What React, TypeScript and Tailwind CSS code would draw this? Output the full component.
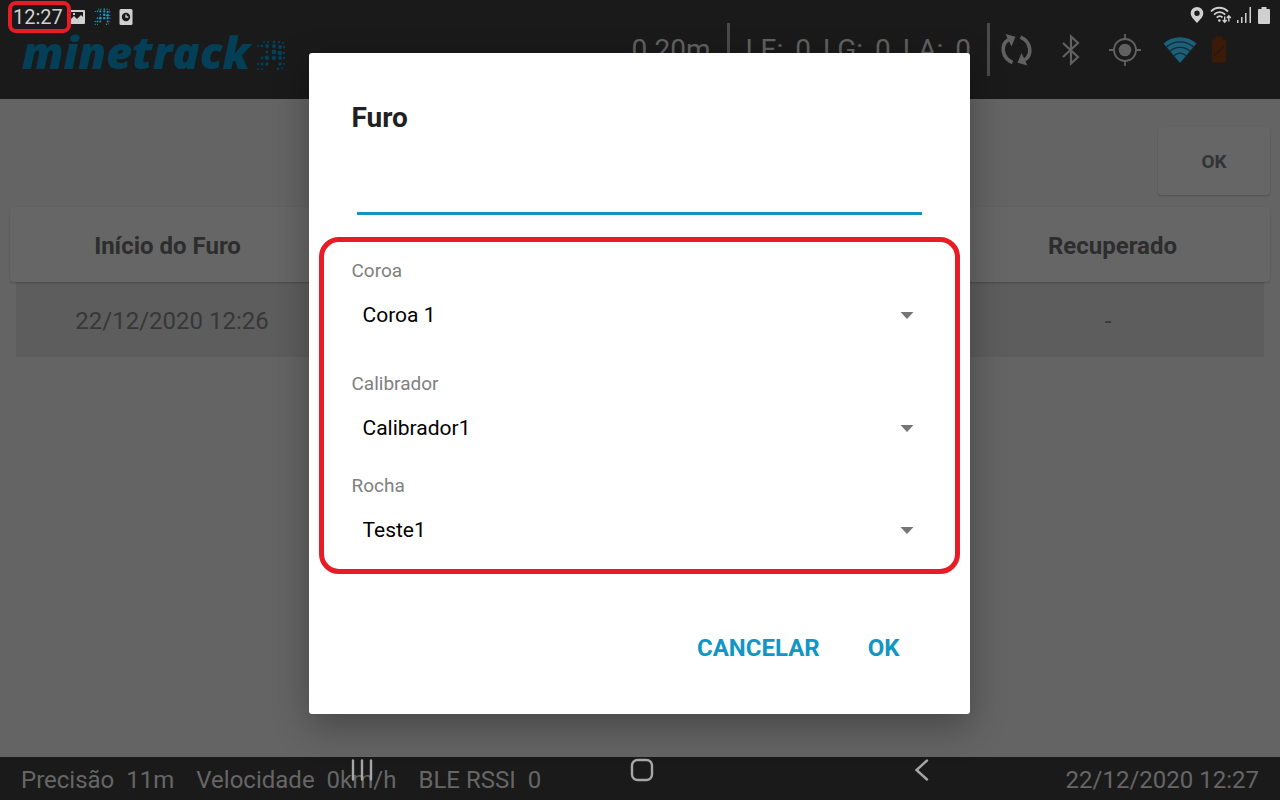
import React from "react";

const dots: [number, number, number][] = [
  [10, 2, 1], [14, 2, 1.2], [20, 2, 1.4], [25, 2, 1.2], [29, 3, 1],
  [4, 6, 1], [8, 6, 1.4], [13, 6, 2], [20, 6, 2], [26, 7, 2], [30, 7, 1.2],
  [13, 12, 1.4], [20, 12, 2.4], [26, 13, 2.4], [30, 13, 1.2],
  [8, 18, 1.4], [13, 18, 2.4], [20, 18, 2.2], [26, 18, 2], [30, 18, 1.2],
  [4, 24, 1.2], [8, 24, 1.6], [13, 24, 1.8], [26, 24, 1.8], [30, 24, 1],
  [4, 29, 1], [8, 29, 1], [24, 29, 1.4], [28, 28, 1],
];

function DotArrow({ className }: { className: string }) {
  return (
    <svg viewBox="0 0 32 32" className={className} fill="currentColor" aria-hidden="true">
      {dots.map(([x, y, r]) => (
        <circle key={`${x}-${y}`} cx={x} cy={y} r={r} />
      ))}
    </svg>
  );
}

function StatusBar() {
  return (
    <div className="absolute inset-x-0 top-0 z-30 flex h-[34px] items-center justify-between pl-2 pr-2.5 text-[#d0d0d0]">
      <div className="flex items-center">
        <time className="flex h-8 items-center rounded-lg border-4 border-[#e81c24] pl-px pr-1 text-xl leading-6">12:27</time>
        <svg viewBox="0 0 14 16" className="h-4 w-3.5" aria-hidden="true">
          <path fill="currentColor" fillRule="evenodd" d="M0 1h13a1 1 0 0 1 1 1v12a1 1 0 0 1-1 1H0zM0 3v7l3-3 3 3 4-4 2 2V3zM2 4h2v2H2z" />
        </svg>
        <DotArrow className="ml-2 h-[18px] w-[18px] text-[#2196c4]" />
        <svg viewBox="0 0 14 16" className="ml-2 h-4 w-3.5" aria-hidden="true">
          <rect x="0.5" width="13" height="16" rx="1.5" fill="currentColor" />
          <circle cx="7" cy="8" r="4.2" fill="#1a1a1a" />
          <path d="M7 5.500V8h2.300" fill="none" stroke="currentColor" strokeWidth="1.3" />
        </svg>
      </div>
      <div className="flex items-center pb-1">
        <svg viewBox="0 0 14 16" className="h-4 w-3.5" aria-hidden="true">
          <path fill="currentColor" fillRule="evenodd" d="M7 0a6.3 6.3 0 0 1 6.3 6.3C13.300 10 10 12.500 7 16 4 12.500.7 10 .7 6.300A6.300 6.300 0 0 1 7 0zm0 3.600a2.700 2.700 0 1 0 0 5.400 2.700 2.700 0 0 0 0-5.400z" />
        </svg>
        <svg viewBox="0 0 22 18" className="ml-1.5 h-[18px] w-[22px]" fill="none" stroke="currentColor" strokeWidth="1.8" aria-hidden="true">
          <path d="M1 5.500C5.500.5 13 .5 18 5.500M4 8.700c3.200-3.500 8-3.500 11.200 0M6.700 11.700c2-2 4-2 5.800-.2" />
          <circle cx="9.300" cy="14.500" r="1.300" fill="currentColor" stroke="none" />
          <path strokeWidth="1.400" d="M14.700 10.500v5.500M12.700 14l2 2.200 2-2.200M18.800 15.500V10M16.800 12l2-2.200 2 2.200" />
        </svg>
        <svg viewBox="0 0 16 16" className="ml-1 h-4 w-4" fill="currentColor" aria-hidden="true">
          <path d="M1 13h1.500v3H1zM5 10h1.500v6H5zM9 6h1.500v10H9zM13.500 0H15v16h-1.500z" />
        </svg>
        <svg viewBox="0 0 12 17" className="ml-1.5 h-[17px] w-3" fill="currentColor" aria-hidden="true">
          <path d="M3.500 0h5v2H11a1 1 0 0 1 1 1v13a1 1 0 0 1-1 1H1a1 1 0 0 1-1-1V3a1 1 0 0 1 1-1h2.500z" />
        </svg>
      </div>
    </div>
  );
}

function SyncArrow() {
  return (
    <>
      <path d="M12.500 29.500C2 25 0 12 8.500 6.500" fill="none" stroke="currentColor" strokeWidth="3.600" />
      <path d="M5.500 1l10 2.800-4 9.700z" fill="currentColor" />
    </>
  );
}

function Header() {
  return (
    <header className="flex h-[99px] items-center justify-between bg-[#1a1a1a] pl-[22px] pr-[53px] text-[#616161]">
      <div className="flex items-center gap-1 pt-1 text-[#033f57]">
        <span className="font-['Open_Sans',sans-serif] text-[45px] font-extrabold italic leading-[56px]">minetrack</span>
        <DotArrow className="mt-2 h-8 w-8" />
      </div>
      <div className="flex items-center gap-4 text-[28px] leading-9">
        <span>0.20m</span>
        <span className="h-[53px] w-[3px] bg-[#4a4a4a]" />
        <div className="flex gap-3">
          <span>LE:</span>
          <span>0</span>
          <span>LG:</span>
          <span>0</span>
          <span>LA:</span>
          <span>0</span>
        </div>
        <span className="h-[53px] w-[3px] bg-[#4a4a4a]" />
        <div className="flex items-center gap-[22px]">
          <svg viewBox="0 0 33 34" className="-ml-1.5 h-[34px] w-[33px]" aria-label="Sincronizar">
            <SyncArrow />
            <g transform="rotate(180 16.500 16.800)">
              <SyncArrow />
            </g>
          </svg>
          <svg viewBox="0 0 32 32" className="h-8 w-8" fill="none" stroke="currentColor" strokeWidth="2.200" aria-label="Bluetooth">
            <path d="M8 9l15 14-7 6.500V2.500L23 9 8 23" />
          </svg>
          <svg viewBox="0 0 32 32" className="h-8 w-8" fill="none" stroke="currentColor" strokeWidth="1.800" aria-label="GPS">
            <circle cx="16" cy="16" r="11" />
            <circle cx="16" cy="16" r="6.300" fill="currentColor" stroke="none" />
            <path d="M16 0v5M16 27v5M0 16h5M27 16h5" />
          </svg>
          <svg viewBox="0 0 34 28" className="h-7 w-[34px]" aria-label="Wi-Fi">
            <path d="M.5 7.500C10-1 24-1 33.500 7.500L17 27z" fill="#1b5f7b" />
            <path d="M3 11.500C11 4 23 4 31 11.500M6.500 15.500c6-5.500 15-5.500 21 0M10.500 20c4-3.500 9-3.500 13 0" fill="none" stroke="#1a2930" strokeWidth="1.300" />
          </svg>
          <svg viewBox="0 0 16 28" className="-ml-2 h-7 w-4" aria-label="Bateria">
            <path d="M4.500 0.500h7v3H15v23H1v-23h3.500z" fill="#3c1a08" />
            <path d="M3 20L13 10" stroke="#241a16" strokeWidth="1.800" />
          </svg>
        </div>
      </div>
    </header>
  );
}

function HoleTable() {
  return (
    <table className="mx-2.5 mt-3 block text-2xl text-[#2d2d2d]">
      <thead className="relative block rounded-sm bg-[#666666] shadow-[0_1px_2px_rgba(0,0,0,0.22)]">
        <tr className="grid h-[75px] grid-cols-4 items-center pt-0.5">
          <th className="font-bold">Início do Furo</th>
          <td />
          <td />
          <th className="font-bold">Recuperado</th>
        </tr>
      </thead>
      <tbody className="mx-1.5 block bg-[#5d5d5d] text-[#373737]">
        <tr className="grid h-[75px] grid-cols-4 items-center pt-0.5 text-center">
          <td>22/12/2020 12:26</td>
          <td />
          <td />
          <td>-</td>
        </tr>
      </tbody>
    </table>
  );
}

function SelectField({ id, label, value }: { id: string; label: string; value: string }) {
  return (
    <div>
      <label htmlFor={id} className="block text-[19px] leading-6 text-[#808080]">
        {label}
      </label>
      <div className="mt-[11px] grid items-center">
        <select id={id} defaultValue={value} className="col-start-1 row-start-1 h-[42px] w-full appearance-none bg-transparent pl-[11px] pr-12 pt-0.5 text-[21px] text-black outline-none">
          <option>{value}</option>
        </select>
        <svg viewBox="0 0 14 7" className="pointer-events-none col-start-1 row-start-1 mr-[13px] h-[7px] w-3.5 justify-self-end" aria-hidden="true">
          <path d="M0.500 0h13L7 7z" fill="#757575" />
        </svg>
      </div>
    </div>
  );
}

function HoleDialog() {
  return (
    <div className="absolute inset-0 z-20 flex items-start justify-center pr-0.5 pt-[53px]">
      <form
        role="dialog"
        aria-labelledby="dialog-title"
        onSubmit={(event) => event.preventDefault()}
        className="w-full max-w-[661px] rounded-[3px] bg-white pb-[42px] pt-[47px] shadow-[0_12px_36px_rgba(0,0,0,0.3)]"
      >
        <h1 id="dialog-title" className="px-[43px] text-[28px] font-bold leading-9 text-[#212121]">
          Furo
        </h1>
        <div className="mt-[15px] px-12">
          <input aria-labelledby="dialog-title" type="text" className="block h-16 w-full border-b-3 border-[#1493bf] text-[21px] text-black outline-none" />
        </div>
        <div className="mx-2.5 mt-[22px] rounded-[20px] border-5 border-[#e81c24] px-7 pb-[18px] pt-[17px]">
          <SelectField id="coroa" label="Coroa" value="Coroa 1" />
          <div className="mt-9 flex flex-col gap-[25px]">
            <SelectField id="calibrador" label="Calibrador" value="Calibrador1" />
            <SelectField id="rocha" label="Rocha" value="Teste1" />
          </div>
        </div>
        <div className="mt-[50px] flex justify-end pr-[46px] text-2xl font-bold text-[#1196c5]">
          <button type="button" className="h-12 px-6">CANCELAR</button>
          <button type="submit" className="h-12 px-6">OK</button>
        </div>
      </form>
    </div>
  );
}

function NavigationBar() {
  const icon = "h-6 w-6";
  return (
    <nav className="absolute inset-x-0 bottom-0 z-30 flex h-[43px] items-start justify-center gap-64 pl-1 pt-px text-[#a6a6a6]">
      <button type="button" aria-label="Recentes">
        <svg viewBox="0 0 24 24" className={icon} stroke="currentColor" strokeWidth="2.400" strokeLinecap="round">
          <path d="M3 2.500v19M12 2.500v19M21 2.500v19" />
        </svg>
      </button>
      <button type="button" aria-label="Início">
        <svg viewBox="0 0 24 24" className={icon} fill="none" stroke="currentColor" strokeWidth="2.400">
          <rect x="2" y="2" width="20" height="20" rx="5.500" />
        </svg>
      </button>
      <button type="button" aria-label="Voltar">
        <svg viewBox="0 0 24 24" className={icon} fill="none" stroke="currentColor" strokeWidth="2.400" strokeLinecap="round">
          <path d="M17 2.500L6.500 12 17 21.500" />
        </svg>
      </button>
    </nav>
  );
}

export default function App() {
  return (
    <div className="relative flex min-h-screen flex-col overflow-hidden bg-[#646464] font-[Roboto,sans-serif]">
      <StatusBar />
      <Header />
      <main className="grow">
        <div className="flex justify-end px-2.5 pt-7">
          <button type="button" className="h-[68px] w-28 rounded-sm bg-[#666666] pt-0.5 text-[19px] font-bold text-[#333333] shadow-[0_1px_2px_rgba(0,0,0,0.2)]">
            OK
          </button>
        </div>
        <HoleTable />
      </main>
      <footer className="flex h-[43px] items-center justify-between bg-[#1a1a1a] px-[21px] pt-0.5 text-2xl text-[#666666]">
        <div className="flex gap-[22px]">
          <span className="flex gap-3"><span>Precisão</span><span>11m</span></span>
          <span className="flex gap-3"><span>Velocidade</span><span>0km/h</span></span>
          <span className="flex gap-3"><span>BLE RSSI</span><span>0</span></span>
        </div>
        <time>22/12/2020 12:27</time>
      </footer>
      <HoleDialog />
      <NavigationBar />
    </div>
  );
}
